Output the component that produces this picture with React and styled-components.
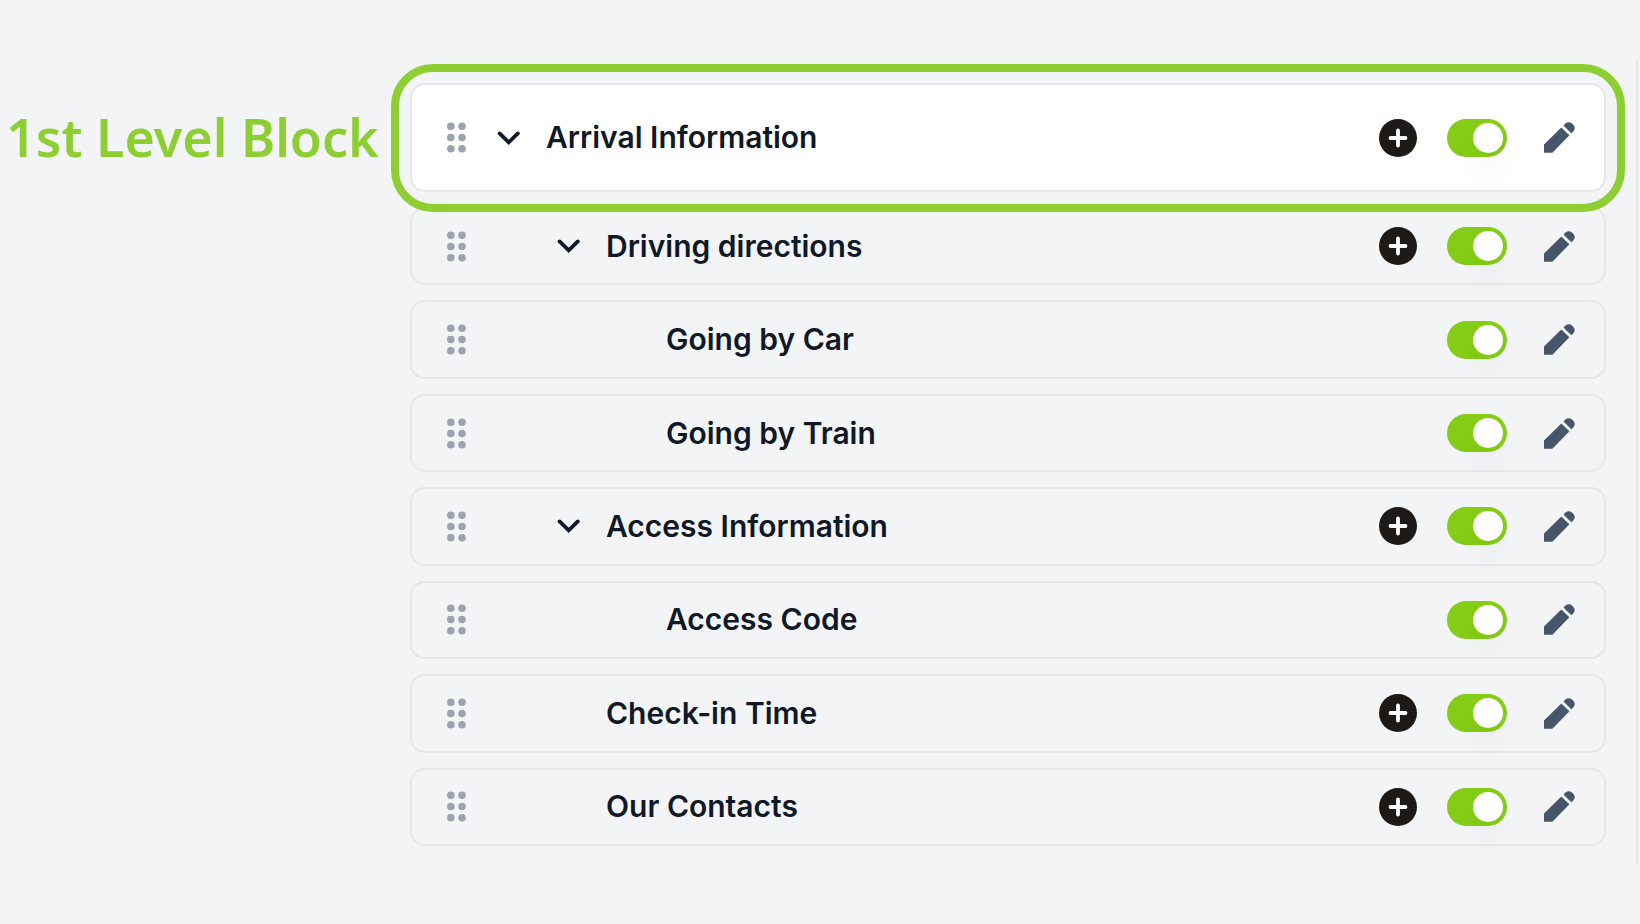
import React, { useState } from 'react';
import styled, { createGlobalStyle } from 'styled-components';

const GlobalStyle = createGlobalStyle`
  * {
    box-sizing: border-box;
  }
  body {
    margin: 0;
    background: #f3f4f6;
    color: #111827;
    font-family: Inter, 'Liberation Sans', sans-serif;
  }
`;

const Page = styled.main`
  display: grid;
  grid-template-columns: 410px 1fr;
  padding: 59px 2px 59px 0;
`;

const Aside = styled.aside`
  padding: 24px 0 0 6px;
`;

const LevelLabel = styled.h1`
  display: flex;
  align-items: center;
  height: 108px;
  margin: 0;
  color: #8dcf32;
  font-family: 'Noto Sans', 'Open Sans', sans-serif;
  font-size: 52px;
  font-weight: 600;
  line-height: 60px;
  white-space: nowrap;
`;

const Panel = styled.section`
  padding: 24px 30px 19px 0;
  border-right: 2px solid #e5e7eb;
`;

const Row = styled.div`
  position: relative;
  display: flex;
  align-items: center;
  padding: 0 29px 0 35px;
  border: 2px solid #e5e7eb;
  border-radius: 15px;
`;

const TopRow = styled(Row)`
  height: 109px;
  margin-bottom: 15px;
  background: #fff;
`;

const Highlight = styled.div`
  position: absolute;
  inset: -21px -21px -22px;
  z-index: 1;
  border: 8px solid #8dcf32;
  border-radius: 42px;
  pointer-events: none;
`;

const Children = styled.div`
  display: grid;
  grid-auto-rows: 1fr;
  gap: 15px;
  min-height: 639px;
`;

const IconButton = styled.button`
  display: flex;
  align-items: center;
  justify-content: center;
  padding: 0;
  border: 0;
  background: none;
  color: inherit;
  cursor: pointer;
`;

const DragHandle = styled(IconButton)`
  color: #9ca3af;
  cursor: grab;
`;

const Heading = styled.div`
  display: flex;
  align-items: center;
  flex: 1;
  gap: 25px;
  padding-left: ${({ $level }) => 30 + $level * 60}px;
`;

const ChevronSlot = styled.div`
  width: 24px;
`;

const Title = styled.label`
  padding-bottom: 1px;
  font-size: 30px;
  font-weight: 600;
  line-height: 40px;
`;

const Actions = styled.div`
  display: flex;
  align-items: center;
`;

const AddButton = styled(IconButton)`
  width: 38px;
  height: 38px;
  margin-right: 30px;
  border-radius: 50%;
  background: #1c1917;
  color: #fff;
`;

const Toggle = styled.input`
  appearance: none;
  width: 60px;
  height: 38px;
  margin: 0 37px 0 0;
  padding: 4px;
  border-radius: 19px;
  background: #d1d5db;
  cursor: pointer;

  &::before {
    content: '';
    display: block;
    width: 30px;
    height: 30px;
    border-radius: 50%;
    background: #fff;
    box-shadow: 0 20px 28px 0 rgba(0, 0, 0, 0.04);
  }

  &:checked {
    background: #84cc16;
  }

  &:checked::before {
    margin-left: auto;
  }
`;

const EditButton = styled(IconButton)`
  color: #475569;
`;

const DotsIcon = () => (
  <svg width="20" height="31" viewBox="0 0 20 31" fill="currentColor">
    {[3.8, 15].map(x => [4.2, 15.5, 26.7].map(y => <circle key={`${x}-${y}`} cx={x} cy={y} r="3.8" />))}
  </svg>
);

const ChevronIcon = () => (
  <svg width="24" height="16" viewBox="0 0 24 16" fill="none" stroke="currentColor" strokeWidth="3.8">
    <path d="M2.6 3.4L11.7 12.4L20.8 3.4" strokeLinecap="round" />
  </svg>
);

const PlusIcon = () => (
  <svg width="20" height="20" viewBox="0 0 20 20" stroke="currentColor" strokeWidth="3.8" strokeLinecap="round">
    <path d="M10 2.5V17.5M2.5 10H17.5" />
  </svg>
);

const PencilIcon = () => (
  <svg width="31" height="31" viewBox="0 0 31 31" fill="currentColor">
    <path d="M0 22.5L17.3 5.5L25.4 13.3L8.4 30.7H0Z" />
    <path d="M19.5 3.6L21.5 1.6Q24.7 -1.2 27.9 1.4L29.3 2.8Q32.2 6 29.4 9.2L27.3 11.3Z" />
  </svg>
);

const blocks = [
  { id: 'driving', title: 'Driving directions', level: 1, open: true, canAdd: true },
  { id: 'car', title: 'Going by Car', level: 2 },
  { id: 'train', title: 'Going by Train', level: 2 },
  { id: 'access', title: 'Access Information', level: 1, open: true, canAdd: true },
  { id: 'code', title: 'Access Code', level: 2 },
  { id: 'checkin', title: 'Check-in Time', level: 1, canAdd: true },
  { id: 'contacts', title: 'Our Contacts', level: 1, canAdd: true },
];

const BlockContent = ({ block }) => {
  const { id, title, level, open, canAdd } = block;
  const [enabled, setEnabled] = useState(true);

  return (
    <>
      <DragHandle type="button" aria-label={`Move ${title}`}>
        <DotsIcon />
      </DragHandle>
      <Heading $level={level}>
        <ChevronSlot>
          {open && (
            <IconButton type="button" aria-label={`Collapse ${title}`}>
              <ChevronIcon />
            </IconButton>
          )}
        </ChevronSlot>
        <Title htmlFor={id}>{title}</Title>
      </Heading>
      <Actions>
        {canAdd && (
          <AddButton type="button" aria-label={`Add to ${title}`}>
            <PlusIcon />
          </AddButton>
        )}
        <Toggle id={id} type="checkbox" checked={enabled} onChange={() => setEnabled(!enabled)} />
        <EditButton type="button" aria-label={`Edit ${title}`}>
          <PencilIcon />
        </EditButton>
      </Actions>
    </>
  );
};

const App = () => (
  <>
    <GlobalStyle />
    <Page>
      <Aside>
        <LevelLabel>1st Level Block</LevelLabel>
      </Aside>
      <Panel>
        <TopRow>
          <BlockContent block={{ id: 'arrival', title: 'Arrival Information', level: 0, open: true, canAdd: true }} />
          <Highlight />
        </TopRow>
        <Children>
          {blocks.map(block => (
            <Row key={block.id}>
              <BlockContent block={block} />
            </Row>
          ))}
        </Children>
      </Panel>
    </Page>
  </>
);

export default App;
